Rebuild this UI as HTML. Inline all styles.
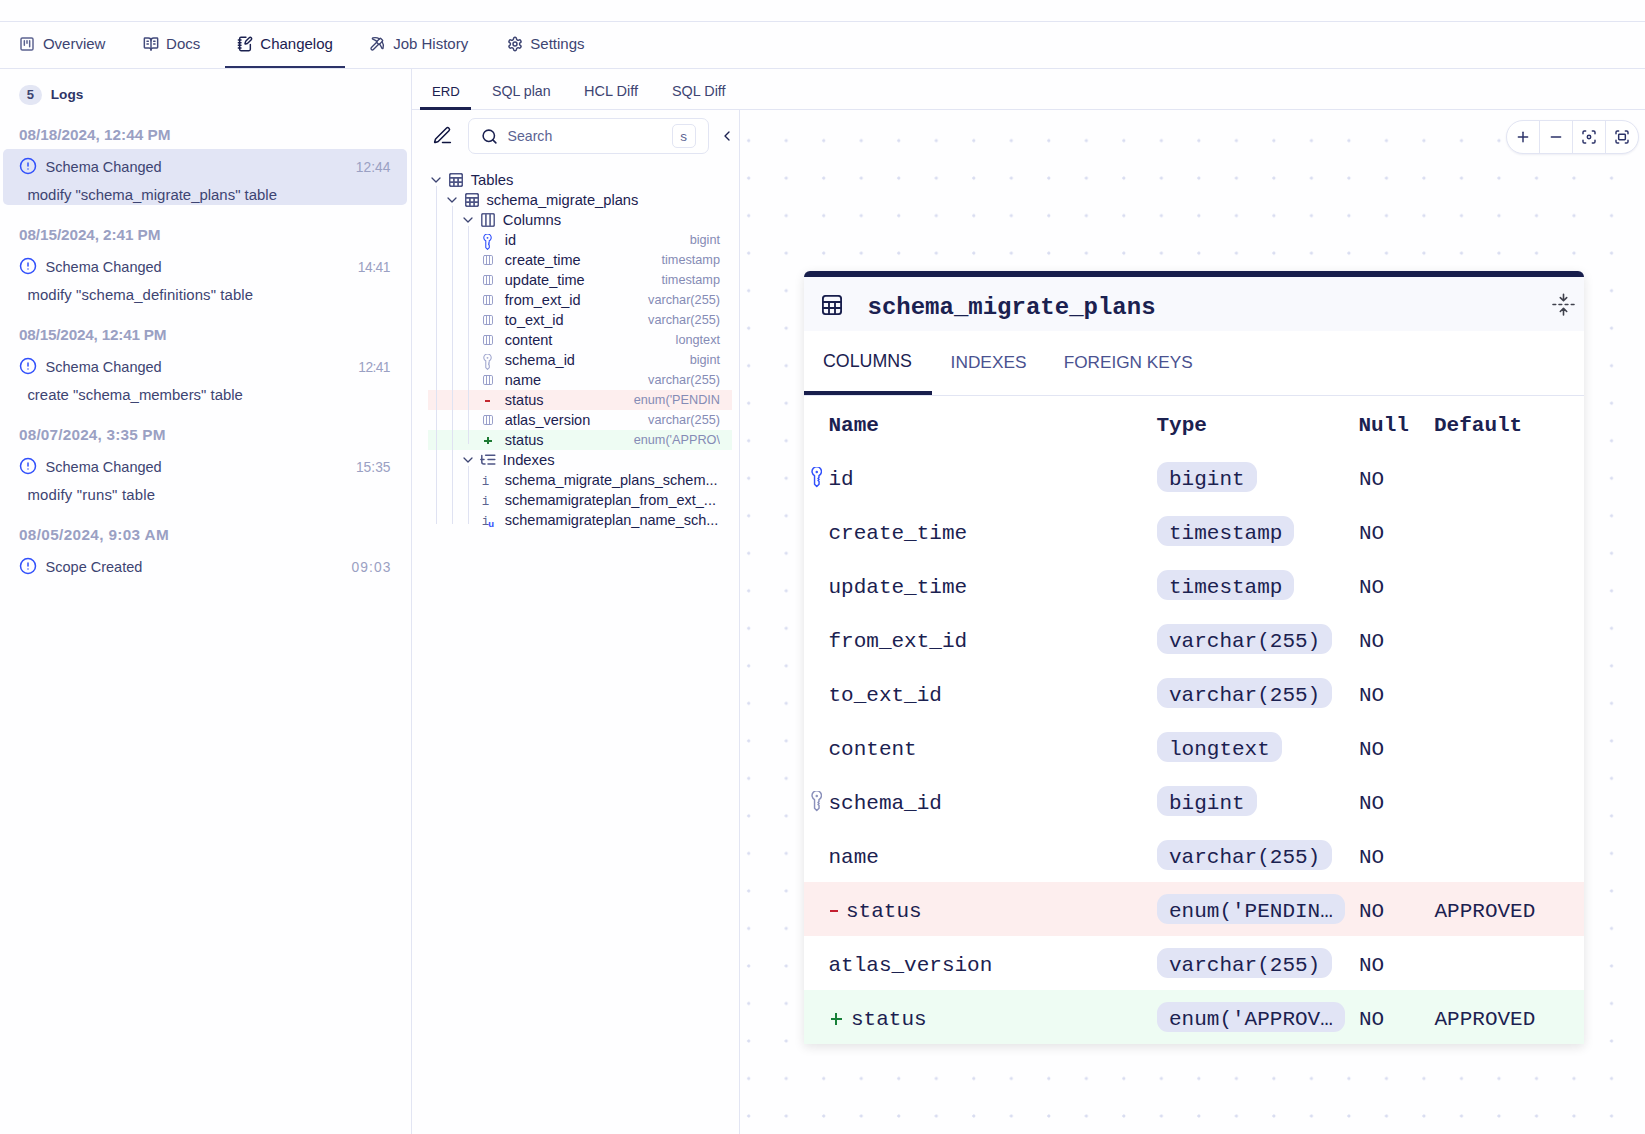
<!DOCTYPE html>
<html><head><meta charset="utf-8"><title>Changelog</title>
<style>
html,body{margin:0;padding:0;}
body{width:1645px;height:1134px;position:relative;overflow:hidden;background:#fefeff;font-family:"Liberation Sans",sans-serif;}
.t{position:absolute;white-space:nowrap;}
.r{position:absolute;}
svg.r{display:block;}
</style></head><body>
<div class="r" style="left:0px;top:21px;width:1645px;height:1px;background:#e2e5f3;"></div>
<div class="r" style="left:0px;top:68px;width:1645px;height:1px;background:#e2e5f3;"></div>
<div class="r" style="left:225px;top:66px;width:120px;height:2px;background:#2b3268;"></div>
<div class="t" style="left:42.9px;top:36.30px;font-size:15px;line-height:15px;font-family:'Liberation Sans',sans-serif;color:#3d4472;font-weight:400;">Overview</div>
<div class="t" style="left:166.1px;top:36.30px;font-size:15px;line-height:15px;font-family:'Liberation Sans',sans-serif;color:#3d4472;font-weight:400;">Docs</div>
<div class="t" style="left:260.29999999999995px;top:36.30px;font-size:15px;line-height:15px;font-family:'Liberation Sans',sans-serif;color:#1b2150;font-weight:400;">Changelog</div>
<div class="t" style="left:393.2px;top:36.30px;font-size:15px;line-height:15px;font-family:'Liberation Sans',sans-serif;color:#3d4472;font-weight:400;">Job History</div>
<div class="t" style="left:530.3px;top:36.30px;font-size:15px;line-height:15px;font-family:'Liberation Sans',sans-serif;color:#3d4472;font-weight:400;">Settings</div>
<svg class="r" style="left:19px;top:36px;" width="16" height="16" viewBox="0 0 24 24" fill="none" stroke="#5b6290" stroke-width="2.2" stroke-linecap="round" stroke-linejoin="round"><rect width="18" height="18" x="3" y="3" rx="2"/><path d="M8 7v7"/><path d="M12 7v4"/><path d="M16 7v9"/></svg>
<svg class="r" style="left:143px;top:36px;" width="16" height="16" viewBox="0 0 24 24" fill="none" stroke="#424a7c" stroke-width="2.2" stroke-linecap="round" stroke-linejoin="round"><path d="M12 7v14"/><path d="M16 12h2"/><path d="M16 8h2"/><path d="M3 18a1 1 0 0 1-1-1V4a1 1 0 0 1 1-1h5a4 4 0 0 1 4 4 4 4 0 0 1 4-4h5a1 1 0 0 1 1 1v13a1 1 0 0 1-1 1h-6a3 3 0 0 0-3 3 3 3 0 0 0-3-3z"/><path d="M6 12h2"/><path d="M6 8h2"/></svg>
<svg class="r" style="left:237px;top:36px;" width="16" height="16" viewBox="0 0 24 24" fill="none" stroke="#1b2150" stroke-width="2.2" stroke-linecap="round" stroke-linejoin="round"><path d="M13.4 2H6a2 2 0 0 0-2 2v16a2 2 0 0 0 2 2h12a2 2 0 0 0 2-2v-7.4"/><path d="M2 6h4"/><path d="M2 10h4"/><path d="M2 14h4"/><path d="M2 18h4"/><path d="M21.378 5.626a1 1 0 1 0-3.004-3.004l-5.01 5.012a2 2 0 0 0-.506.854l-.837 2.87a.5.5 0 0 0 .62.62l2.87-.837a2 2 0 0 0 .854-.506z"/></svg>
<svg class="r" style="left:369px;top:36px;" width="16" height="16" viewBox="0 0 24 24" fill="none" stroke="#3d4472" stroke-width="2" stroke-linecap="round" stroke-linejoin="round"><path d="M14.531 12.469 6.619 20.38a1 1 0 1 1-3-3l7.912-7.912"/><path d="M15.686 4.314A12.5 12.5 0 0 0 5.461 2.958 1 1 0 0 0 5.58 4.71a22 22 0 0 1 6.318 3.393"/><path d="M17.7 3.7a1 1 0 0 0-1.4 0l-4.6 4.6a1 1 0 0 0 0 1.4l2.6 2.6a1 1 0 0 0 1.4 0l4.6-4.6a1 1 0 0 0 0-1.4z"/><path d="M19.686 8.314a12.501 12.501 0 0 1 1.356 10.225 1 1 0 0 1-1.751-.119 22 22 0 0 0-3.393-6.319"/></svg>
<svg class="r" style="left:507px;top:36px;" width="16" height="16" viewBox="0 0 24 24" fill="none" stroke="#3d4472" stroke-width="2.2" stroke-linecap="round" stroke-linejoin="round"><path d="M12.22 2h-.44a2 2 0 0 0-2 2v.18a2 2 0 0 1-1 1.73l-.43.25a2 2 0 0 1-2 0l-.15-.08a2 2 0 0 0-2.73.73l-.22.38a2 2 0 0 0 .73 2.73l.15.1a2 2 0 0 1 1 1.72v.51a2 2 0 0 1-1 1.74l-.15.09a2 2 0 0 0-.73 2.73l.22.38a2 2 0 0 0 2.73.73l.15-.08a2 2 0 0 1 2 0l.43.25a2 2 0 0 1 1 1.73V20a2 2 0 0 0 2 2h.44a2 2 0 0 0 2-2v-.18a2 2 0 0 1 1-1.73l.43-.25a2 2 0 0 1 2 0l.15.08a2 2 0 0 0 2.73-.73l.22-.39a2 2 0 0 0-.73-2.73l-.15-.08a2 2 0 0 1-1-1.74v-.5a2 2 0 0 1 1-1.74l.15-.09a2 2 0 0 0 .73-2.73l-.22-.38a2 2 0 0 0-2.73-.73l-.15.08a2 2 0 0 1-2 0l-.43-.25a2 2 0 0 1-1-1.73V4a2 2 0 0 0-2-2z"/><circle cx="12" cy="12" r="3"/></svg>
<div class="r" style="left:411px;top:69px;width:1px;height:1065px;background:#e2e5f3;"></div>
<div class="r" style="left:19px;top:85px;width:23px;height:20px;background:#e3e6f4;border-radius:10px;"></div>
<div class="t" style="left:26.8px;top:88.00px;font-size:13px;line-height:13px;font-family:'Liberation Sans',sans-serif;color:#3d4472;font-weight:700;">5</div>
<div class="t" style="left:50.8px;top:88.49px;font-size:13.6px;line-height:13.6px;font-family:'Liberation Sans',sans-serif;color:#2d3466;font-weight:700;">Logs</div>
<div class="r" style="left:3px;top:149px;width:404px;height:56px;background:#e2e5f5;border-radius:5px;"></div>
<div class="t" style="left:19px;top:127.05px;font-size:15.3px;line-height:15.3px;font-family:'Liberation Sans',sans-serif;color:#9aa0c3;font-weight:700;letter-spacing:0px;">08/18/2024, 12:44 PM</div>
<svg class="r" style="left:19px;top:157px;" width="18" height="18" viewBox="0 0 24 24" fill="none" stroke="#3150fb" stroke-width="2" stroke-linecap="round" stroke-linejoin="round"><circle cx="12" cy="12" r="10"/><line x1="12" x2="12" y1="8" y2="12"/><line x1="12" x2="12.01" y1="16" y2="16"/></svg>
<div class="t" style="left:45.6px;top:159.73px;font-size:14.5px;line-height:14.5px;font-family:'Liberation Sans',sans-serif;color:#3d4472;font-weight:400;">Schema Changed</div>
<div class="t" style="right:1254.45px;top:161.02px;font-size:13.8px;line-height:13.8px;font-family:'Liberation Sans',sans-serif;color:#9aa0c3;font-weight:400;letter-spacing:0.05px;">12:44</div>
<div class="t" style="left:27.4px;top:188.09px;font-size:14.9px;line-height:14.9px;font-family:'Liberation Sans',sans-serif;color:#3d4472;font-weight:400;letter-spacing:0.018px;">modify "schema_migrate_plans" table</div>
<div class="t" style="left:19px;top:227.05px;font-size:15.3px;line-height:15.3px;font-family:'Liberation Sans',sans-serif;color:#9aa0c3;font-weight:700;letter-spacing:-0.08px;">08/15/2024, 2:41 PM</div>
<svg class="r" style="left:19px;top:257px;" width="18" height="18" viewBox="0 0 24 24" fill="none" stroke="#3150fb" stroke-width="2" stroke-linecap="round" stroke-linejoin="round"><circle cx="12" cy="12" r="10"/><line x1="12" x2="12" y1="8" y2="12"/><line x1="12" x2="12.01" y1="16" y2="16"/></svg>
<div class="t" style="left:45.6px;top:259.73px;font-size:14.5px;line-height:14.5px;font-family:'Liberation Sans',sans-serif;color:#3d4472;font-weight:400;">Schema Changed</div>
<div class="t" style="right:1254.925px;top:261.02px;font-size:13.8px;line-height:13.8px;font-family:'Liberation Sans',sans-serif;color:#9aa0c3;font-weight:400;letter-spacing:-0.425px;">14:41</div>
<div class="t" style="left:27.4px;top:288.09px;font-size:14.9px;line-height:14.9px;font-family:'Liberation Sans',sans-serif;color:#3d4472;font-weight:400;letter-spacing:0.097px;">modify "schema_definitions" table</div>
<div class="t" style="left:19px;top:327.05px;font-size:15.3px;line-height:15.3px;font-family:'Liberation Sans',sans-serif;color:#9aa0c3;font-weight:700;letter-spacing:-0.2px;">08/15/2024, 12:41 PM</div>
<svg class="r" style="left:19px;top:357px;" width="18" height="18" viewBox="0 0 24 24" fill="none" stroke="#3150fb" stroke-width="2" stroke-linecap="round" stroke-linejoin="round"><circle cx="12" cy="12" r="10"/><line x1="12" x2="12" y1="8" y2="12"/><line x1="12" x2="12.01" y1="16" y2="16"/></svg>
<div class="t" style="left:45.6px;top:359.73px;font-size:14.5px;line-height:14.5px;font-family:'Liberation Sans',sans-serif;color:#3d4472;font-weight:400;">Schema Changed</div>
<div class="t" style="right:1255.075px;top:361.02px;font-size:13.8px;line-height:13.8px;font-family:'Liberation Sans',sans-serif;color:#9aa0c3;font-weight:400;letter-spacing:-0.575px;">12:41</div>
<div class="t" style="left:27.4px;top:388.09px;font-size:14.9px;line-height:14.9px;font-family:'Liberation Sans',sans-serif;color:#3d4472;font-weight:400;letter-spacing:0.018px;">create "schema_members" table</div>
<div class="t" style="left:19px;top:427.05px;font-size:15.3px;line-height:15.3px;font-family:'Liberation Sans',sans-serif;color:#9aa0c3;font-weight:700;letter-spacing:0.2px;">08/07/2024, 3:35 PM</div>
<svg class="r" style="left:19px;top:457px;" width="18" height="18" viewBox="0 0 24 24" fill="none" stroke="#3150fb" stroke-width="2" stroke-linecap="round" stroke-linejoin="round"><circle cx="12" cy="12" r="10"/><line x1="12" x2="12" y1="8" y2="12"/><line x1="12" x2="12.01" y1="16" y2="16"/></svg>
<div class="t" style="left:45.6px;top:459.73px;font-size:14.5px;line-height:14.5px;font-family:'Liberation Sans',sans-serif;color:#3d4472;font-weight:400;">Schema Changed</div>
<div class="t" style="right:1254.475px;top:461.02px;font-size:13.8px;line-height:13.8px;font-family:'Liberation Sans',sans-serif;color:#9aa0c3;font-weight:400;letter-spacing:0.025px;">15:35</div>
<div class="t" style="left:27.4px;top:488.09px;font-size:14.9px;line-height:14.9px;font-family:'Liberation Sans',sans-serif;color:#3d4472;font-weight:400;letter-spacing:0.206px;">modify "runs" table</div>
<div class="t" style="left:19px;top:527.05px;font-size:15.3px;line-height:15.3px;font-family:'Liberation Sans',sans-serif;color:#9aa0c3;font-weight:700;letter-spacing:0.36px;">08/05/2024, 9:03 AM</div>
<svg class="r" style="left:19px;top:557px;" width="18" height="18" viewBox="0 0 24 24" fill="none" stroke="#3150fb" stroke-width="2" stroke-linecap="round" stroke-linejoin="round"><circle cx="12" cy="12" r="10"/><line x1="12" x2="12" y1="8" y2="12"/><line x1="12" x2="12.01" y1="16" y2="16"/></svg>
<div class="t" style="left:45.6px;top:559.73px;font-size:14.5px;line-height:14.5px;font-family:'Liberation Sans',sans-serif;color:#3d4472;font-weight:400;">Scope Created</div>
<div class="t" style="right:1253.4px;top:561.02px;font-size:13.8px;line-height:13.8px;font-family:'Liberation Sans',sans-serif;color:#9aa0c3;font-weight:400;letter-spacing:1.1px;">09:03</div>
<div class="r" style="left:739px;top:110px;width:1px;height:1024px;background:#e2e5f3;"></div>
<div class="r" style="left:412px;top:109px;width:327px;height:1px;background:#e2e5f3;"></div>
<div class="r" style="left:739px;top:109px;width:906px;height:1px;background:#e2e5f3;"></div>
<div class="r" style="left:420px;top:107px;width:51px;height:3px;background:#1b2150;"></div>
<div class="t" style="left:432px;top:84.83px;font-size:13.2px;line-height:13.2px;font-family:'Liberation Sans',sans-serif;color:#1b2150;font-weight:400;">ERD</div>
<div class="t" style="left:492px;top:83.98px;font-size:14.2px;line-height:14.2px;font-family:'Liberation Sans',sans-serif;color:#3d4472;font-weight:400;">SQL plan</div>
<div class="t" style="left:584px;top:83.73px;font-size:14.5px;line-height:14.5px;font-family:'Liberation Sans',sans-serif;color:#3d4472;font-weight:400;">HCL Diff</div>
<div class="t" style="left:672px;top:83.81px;font-size:14.4px;line-height:14.4px;font-family:'Liberation Sans',sans-serif;color:#3d4472;font-weight:400;">SQL Diff</div>
<svg class="r" style="left:431.5px;top:125px;" width="21" height="21" viewBox="0 0 24 24" fill="none" stroke="#0f1440" stroke-width="1.7" stroke-linecap="round" stroke-linejoin="round"><path d="M12 20h9"/><path d="M16.376 3.622a1 1 0 0 1 3.002 3.002L7.368 18.635a2 2 0 0 1-.855.506l-2.872.838a.5.5 0 0 1-.62-.62l.838-2.872a2 2 0 0 1 .506-.854z"/></svg>
<div class="r" style="left:468px;top:118px;width:241px;height:36px;background:#fff;border:1px solid #e2e5f3;border-radius:7px;box-sizing:border-box;"></div>
<svg class="r" style="left:480.5px;top:127.7px;" width="17" height="17" viewBox="0 0 24 24" fill="none" stroke="#1b2150" stroke-width="2.2" stroke-linecap="round" stroke-linejoin="round"><circle cx="11" cy="11" r="8"/><path d="m21 21-4.3-4.3"/></svg>
<div class="t" style="left:507.6px;top:129.06px;font-size:14.1px;line-height:14.1px;font-family:'Liberation Sans',sans-serif;color:#5b6392;font-weight:400;">Search</div>
<div class="r" style="left:672px;top:124px;width:24px;height:24px;background:#fff;border:1px solid #e2e5f3;border-radius:5px;box-sizing:border-box;"></div>
<div class="t" style="left:680.3px;top:129.57px;font-size:13.5px;line-height:13.5px;font-family:'Liberation Sans',sans-serif;color:#5b6392;font-weight:400;">s</div>
<svg class="r" style="left:718.5px;top:127.5px;" width="16" height="16" viewBox="0 0 24 24" fill="none" stroke="#1b2150" stroke-width="2" stroke-linecap="round" stroke-linejoin="round"><path d="m15 18-6-6 6-6"/></svg>
<svg class="r" style="left:428.1px;top:172px;" width="16" height="16" viewBox="0 0 24 24" fill="none" stroke="#3d4472" stroke-width="1.9" stroke-linecap="round" stroke-linejoin="round"><path d="m6 9 6 6 6-6"/></svg>
<svg class="r" style="left:449px;top:173px;" width="14" height="14" viewBox="0 0 20 20" fill="none" stroke="#4d5485" stroke-width="2.4" stroke-linecap="round" stroke-linejoin="round"><rect x="0.9" y="0.9" width="18.2" height="18.2" rx="2.8"/><path d="M1 7h18M1 13h18M7 7v12M13 7v12"/></svg>
<div class="t" style="left:470.7px;top:173.07px;font-size:14.8px;line-height:14.8px;font-family:'Liberation Sans',sans-serif;color:#1b2150;font-weight:400;">Tables</div>
<svg class="r" style="left:444.1px;top:192px;" width="16" height="16" viewBox="0 0 24 24" fill="none" stroke="#3d4472" stroke-width="1.9" stroke-linecap="round" stroke-linejoin="round"><path d="m6 9 6 6 6-6"/></svg>
<svg class="r" style="left:465px;top:193px;" width="14" height="14" viewBox="0 0 20 20" fill="none" stroke="#4d5485" stroke-width="2.4" stroke-linecap="round" stroke-linejoin="round"><rect x="0.9" y="0.9" width="18.2" height="18.2" rx="2.8"/><path d="M1 7h18M1 13h18M7 7v12M13 7v12"/></svg>
<div class="t" style="left:486.5px;top:192.56px;font-size:14.7px;line-height:14.7px;font-family:'Liberation Sans',sans-serif;color:#1b2150;font-weight:400;">schema_migrate_plans</div>
<svg class="r" style="left:460.1px;top:212px;" width="16" height="16" viewBox="0 0 24 24" fill="none" stroke="#3d4472" stroke-width="1.9" stroke-linecap="round" stroke-linejoin="round"><path d="m6 9 6 6 6-6"/></svg>
<svg class="r" style="left:481px;top:213px;" width="14" height="14" viewBox="0 0 20 20" fill="none" stroke="#5b6290" stroke-width="2.4" stroke-linecap="round" stroke-linejoin="round"><rect x="1" y="1" width="18" height="18" rx="2.5"/><path d="M7 1v18M13 1v18"/></svg>
<div class="t" style="left:502.8px;top:212.97px;font-size:14.8px;line-height:14.8px;font-family:'Liberation Sans',sans-serif;color:#1b2150;font-weight:400;">Columns</div>
<svg class="r" style="left:483px;top:233.5px;color:#3150fb" width="9" height="16.5" viewBox="0 0 11 21" fill="none" stroke="#3150fb" stroke-width="1.4" stroke-linecap="round" stroke-linejoin="round"><path d="M3.3 8.7A4.7 4.7 0 1 1 7.7 8.7V10.6L6.8 11.5L7.8 12.5L6.8 13.5L7.8 14.5V17.2L5.5 19.5L3.3 17.2Z"/><circle cx="5.5" cy="4.9" r="0.5" fill="currentColor"/></svg>
<div class="t" style="left:504.8px;top:232.73px;font-size:14.5px;line-height:14.5px;font-family:'Liberation Sans',sans-serif;color:#1b2150;font-weight:400;">id</div>
<div class="t" style="right:925px;top:234.25px;font-size:12.7px;line-height:12.7px;font-family:'Liberation Sans',sans-serif;color:#858bb5;font-weight:400;">bigint</div>
<svg class="r" style="left:483px;top:255px;" width="10" height="10" viewBox="0 0 20 20" fill="none" stroke="#959bc8" stroke-width="1.9" stroke-linecap="round" stroke-linejoin="round"><rect x="1" y="1" width="18" height="18" rx="2.5"/><path d="M7 1v18M13 1v18"/></svg>
<div class="t" style="left:504.8px;top:252.73px;font-size:14.5px;line-height:14.5px;font-family:'Liberation Sans',sans-serif;color:#1b2150;font-weight:400;">create_time</div>
<div class="t" style="right:925px;top:254.25px;font-size:12.7px;line-height:12.7px;font-family:'Liberation Sans',sans-serif;color:#858bb5;font-weight:400;">timestamp</div>
<svg class="r" style="left:483px;top:275px;" width="10" height="10" viewBox="0 0 20 20" fill="none" stroke="#959bc8" stroke-width="1.9" stroke-linecap="round" stroke-linejoin="round"><rect x="1" y="1" width="18" height="18" rx="2.5"/><path d="M7 1v18M13 1v18"/></svg>
<div class="t" style="left:504.8px;top:272.73px;font-size:14.5px;line-height:14.5px;font-family:'Liberation Sans',sans-serif;color:#1b2150;font-weight:400;">update_time</div>
<div class="t" style="right:925px;top:274.25px;font-size:12.7px;line-height:12.7px;font-family:'Liberation Sans',sans-serif;color:#858bb5;font-weight:400;">timestamp</div>
<svg class="r" style="left:483px;top:295px;" width="10" height="10" viewBox="0 0 20 20" fill="none" stroke="#959bc8" stroke-width="1.9" stroke-linecap="round" stroke-linejoin="round"><rect x="1" y="1" width="18" height="18" rx="2.5"/><path d="M7 1v18M13 1v18"/></svg>
<div class="t" style="left:504.8px;top:292.73px;font-size:14.5px;line-height:14.5px;font-family:'Liberation Sans',sans-serif;color:#1b2150;font-weight:400;">from_ext_id</div>
<div class="t" style="right:925px;top:294.25px;font-size:12.7px;line-height:12.7px;font-family:'Liberation Sans',sans-serif;color:#858bb5;font-weight:400;">varchar(255)</div>
<svg class="r" style="left:483px;top:315px;" width="10" height="10" viewBox="0 0 20 20" fill="none" stroke="#959bc8" stroke-width="1.9" stroke-linecap="round" stroke-linejoin="round"><rect x="1" y="1" width="18" height="18" rx="2.5"/><path d="M7 1v18M13 1v18"/></svg>
<div class="t" style="left:504.8px;top:312.73px;font-size:14.5px;line-height:14.5px;font-family:'Liberation Sans',sans-serif;color:#1b2150;font-weight:400;">to_ext_id</div>
<div class="t" style="right:925px;top:314.25px;font-size:12.7px;line-height:12.7px;font-family:'Liberation Sans',sans-serif;color:#858bb5;font-weight:400;">varchar(255)</div>
<svg class="r" style="left:483px;top:335px;" width="10" height="10" viewBox="0 0 20 20" fill="none" stroke="#959bc8" stroke-width="1.9" stroke-linecap="round" stroke-linejoin="round"><rect x="1" y="1" width="18" height="18" rx="2.5"/><path d="M7 1v18M13 1v18"/></svg>
<div class="t" style="left:504.8px;top:332.73px;font-size:14.5px;line-height:14.5px;font-family:'Liberation Sans',sans-serif;color:#1b2150;font-weight:400;">content</div>
<div class="t" style="right:925px;top:334.25px;font-size:12.7px;line-height:12.7px;font-family:'Liberation Sans',sans-serif;color:#858bb5;font-weight:400;">longtext</div>
<svg class="r" style="left:483px;top:353.5px;color:#a3a9d0" width="9" height="16.5" viewBox="0 0 11 21" fill="none" stroke="#a3a9d0" stroke-width="1.4" stroke-linecap="round" stroke-linejoin="round"><path d="M3.3 8.7A4.7 4.7 0 1 1 7.7 8.7V10.6L6.8 11.5L7.8 12.5L6.8 13.5L7.8 14.5V17.2L5.5 19.5L3.3 17.2Z"/><circle cx="5.5" cy="4.9" r="0.5" fill="currentColor"/></svg>
<div class="t" style="left:504.8px;top:352.73px;font-size:14.5px;line-height:14.5px;font-family:'Liberation Sans',sans-serif;color:#1b2150;font-weight:400;">schema_id</div>
<div class="t" style="right:925px;top:354.25px;font-size:12.7px;line-height:12.7px;font-family:'Liberation Sans',sans-serif;color:#858bb5;font-weight:400;">bigint</div>
<svg class="r" style="left:483px;top:375px;" width="10" height="10" viewBox="0 0 20 20" fill="none" stroke="#959bc8" stroke-width="1.9" stroke-linecap="round" stroke-linejoin="round"><rect x="1" y="1" width="18" height="18" rx="2.5"/><path d="M7 1v18M13 1v18"/></svg>
<div class="t" style="left:504.8px;top:372.73px;font-size:14.5px;line-height:14.5px;font-family:'Liberation Sans',sans-serif;color:#1b2150;font-weight:400;">name</div>
<div class="t" style="right:925px;top:374.25px;font-size:12.7px;line-height:12.7px;font-family:'Liberation Sans',sans-serif;color:#858bb5;font-weight:400;">varchar(255)</div>
<div class="r" style="left:428px;top:390px;width:304px;height:20px;background:#fdeeee;"></div>
<div class="r" style="left:485.2px;top:400.2px;width:5px;height:1.7px;background:#c4262e;"></div>
<div class="t" style="left:504.8px;top:392.73px;font-size:14.5px;line-height:14.5px;font-family:'Liberation Sans',sans-serif;color:#1b2150;font-weight:400;">status</div>
<div class="t" style="left:600px;width:120px;top:392.25px;height:17px;overflow:hidden;font-size:12.7px;line-height:17px;font-family:'Liberation Sans',sans-serif;color:#858bb5;text-align:right;white-space:nowrap;"><span style="position:relative;top:-0px">enum('PENDIN</span></div>
<svg class="r" style="left:483px;top:415px;" width="10" height="10" viewBox="0 0 20 20" fill="none" stroke="#959bc8" stroke-width="1.9" stroke-linecap="round" stroke-linejoin="round"><rect x="1" y="1" width="18" height="18" rx="2.5"/><path d="M7 1v18M13 1v18"/></svg>
<div class="t" style="left:504.8px;top:412.73px;font-size:14.5px;line-height:14.5px;font-family:'Liberation Sans',sans-serif;color:#1b2150;font-weight:400;">atlas_version</div>
<div class="t" style="right:925px;top:414.25px;font-size:12.7px;line-height:12.7px;font-family:'Liberation Sans',sans-serif;color:#858bb5;font-weight:400;">varchar(255)</div>
<div class="r" style="left:428px;top:430px;width:304px;height:20px;background:#eefcf3;"></div>
<div class="r" style="left:484.2px;top:440.1px;width:7.8px;height:1.6px;background:#1d7a33;"></div>
<div class="r" style="left:487.3px;top:436.7px;width:1.6px;height:7.8px;background:#1d7a33;"></div>
<div class="t" style="left:504.8px;top:432.73px;font-size:14.5px;line-height:14.5px;font-family:'Liberation Sans',sans-serif;color:#1b2150;font-weight:400;">status</div>
<div class="t" style="left:600px;width:120px;top:432.25px;height:17px;overflow:hidden;font-size:12.7px;line-height:17px;font-family:'Liberation Sans',sans-serif;color:#858bb5;text-align:right;white-space:nowrap;"><span style="position:relative;top:-0px">enum('APPRO\</span></div>
<div class="r" style="left:436px;top:186px;width:1px;height:338px;background:#dfe2f2;"></div>
<div class="r" style="left:452px;top:206px;width:1px;height:318px;background:#dfe2f2;"></div>
<div class="r" style="left:468px;top:226px;width:1px;height:218px;background:#dfe2f2;"></div>
<div class="r" style="left:468px;top:466px;width:1px;height:58px;background:#dfe2f2;"></div>
<svg class="r" style="left:460.1px;top:452px;" width="16" height="16" viewBox="0 0 24 24" fill="none" stroke="#3d4472" stroke-width="1.9" stroke-linecap="round" stroke-linejoin="round"><path d="m6 9 6 6 6-6"/></svg>
<svg class="r" style="left:476px;top:448px;" width="28" height="20" viewBox="0 0 28 20" fill="none" stroke="#4d5485" stroke-width="1.5" stroke-linecap="round" stroke-linejoin="round"><path d="M5.8 7.6V14a2 2 0 0 0 2 2H9"/><path d="M4.8 11.6H8"/><path d="M9.6 7.2H18.8"/><path d="M12 11.6H18.8"/><path d="M12 15.9H18.8"/></svg>
<div class="t" style="left:502.8px;top:452.97px;font-size:14.8px;line-height:14.8px;font-family:'Liberation Sans',sans-serif;color:#1b2150;font-weight:400;">Indexes</div>
<div class="t" style="left:481.8px;top:475.93px;font-size:12.5px;line-height:12.5px;font-family:'Liberation Mono',monospace;color:#5b6290;font-weight:400;">i</div>
<div class="t" style="left:504.8px;top:472.73px;font-size:14.5px;line-height:14.5px;font-family:'Liberation Sans',sans-serif;color:#1b2150;font-weight:400;">schema_migrate_plans_schem...</div>
<div class="t" style="left:481.8px;top:495.93px;font-size:12.5px;line-height:12.5px;font-family:'Liberation Mono',monospace;color:#5b6290;font-weight:400;">i</div>
<div class="t" style="left:504.8px;top:492.73px;font-size:14.5px;line-height:14.5px;font-family:'Liberation Sans',sans-serif;color:#1b2150;font-weight:400;">schemamigrateplan_from_ext_...</div>
<div class="t" style="left:481.8px;top:515.92px;font-size:12.5px;line-height:12.5px;font-family:'Liberation Mono',monospace;color:#5b6290;font-weight:400;">i</div>
<div class="t" style="left:488.3px;top:518.96px;font-size:9.5px;line-height:9.5px;font-family:'Liberation Sans',sans-serif;color:#3150fb;font-weight:700;">u</div>
<div class="t" style="left:504.8px;top:512.73px;font-size:14.5px;line-height:14.5px;font-family:'Liberation Sans',sans-serif;color:#1b2150;font-weight:400;">schemamigrateplan_name_sch...</div>
<div class="r" style="left:740px;top:110px;width:905px;height:1024px;background-image:radial-gradient(circle at 8.7px 30.6px,#d9ddf1 1.2px,transparent 1.9px);background-size:37.52px 37.52px;"></div>
<div class="r" style="left:1506px;top:120px;width:133px;height:34px;background:#fff;border:1px solid #e2e5f3;border-radius:17px;box-sizing:border-box;box-shadow:0 1px 2px rgba(40,50,120,0.08);"></div>
<div class="r" style="left:1539px;top:121px;width:1px;height:32px;background:#e2e5f3;"></div>
<div class="r" style="left:1572px;top:121px;width:1px;height:32px;background:#e2e5f3;"></div>
<div class="r" style="left:1605px;top:121px;width:1px;height:32px;background:#e2e5f3;"></div>
<svg class="r" style="left:1515.2px;top:128.9px;" width="16" height="16" viewBox="0 0 24 24" fill="none" stroke="#2b3268" stroke-width="2.2" stroke-linecap="round" stroke-linejoin="round"><path d="M5 12h14"/><path d="M12 5v14"/></svg>
<svg class="r" style="left:1548px;top:128.9px;" width="16" height="16" viewBox="0 0 24 24" fill="none" stroke="#2b3268" stroke-width="2.2" stroke-linecap="round" stroke-linejoin="round"><path d="M5 12h14"/></svg>
<svg class="r" style="left:1581px;top:128.9px;" width="16" height="16" viewBox="0 0 24 24" fill="none" stroke="#2b3268" stroke-width="2.2" stroke-linecap="round" stroke-linejoin="round"><path d="M3 7V5a2 2 0 0 1 2-2h2"/><path d="M17 3h2a2 2 0 0 1 2 2v2"/><path d="M21 17v2a2 2 0 0 1-2 2h-2"/><path d="M7 21H5a2 2 0 0 1-2-2v-2"/><circle cx="12" cy="12" r="2.6"/></svg>
<svg class="r" style="left:1614px;top:128.9px;" width="16" height="16" viewBox="0 0 24 24" fill="none" stroke="#2b3268" stroke-width="2.2" stroke-linecap="round" stroke-linejoin="round"><path d="M3 7V5a2 2 0 0 1 2-2h2"/><path d="M17 3h2a2 2 0 0 1 2 2v2"/><path d="M21 17v2a2 2 0 0 1-2 2h-2"/><path d="M7 21H5a2 2 0 0 1-2-2v-2"/><rect width="10" height="8" x="7" y="8" rx="1"/></svg>
<div class="r" style="left:804px;top:271px;width:780px;height:773px;background:#fff;border-radius:6px 6px 0 0;box-shadow:0 3px 11px rgba(0,0,0,0.11);"></div>
<div class="r" style="left:804px;top:271px;width:780px;height:6px;background:#181e4c;border-radius:6px 6px 0 0;"></div>
<div class="r" style="left:804px;top:277px;width:780px;height:54px;background:#f8f9fd;"></div>
<svg class="r" style="left:821.5px;top:294.5px;" width="20" height="20" viewBox="0 0 20 20" fill="none" stroke="#181e4c" stroke-width="1.85" stroke-linecap="round" stroke-linejoin="round"><rect x="0.9" y="0.9" width="18.2" height="18.2" rx="2.8"/><path d="M1 7h18M1 13h18M7 7v12M13 7v12"/></svg>
<div class="t" style="left:867.5px;top:295.62px;font-size:24px;line-height:24px;font-family:'Liberation Mono',monospace;color:#1b2150;font-weight:700;">schema_migrate_plans</div>
<svg class="r" style="left:1548px;top:290px;" width="30" height="30" viewBox="0 0 30 30" fill="none" stroke="#3f414c" stroke-width="1.6" stroke-linecap="round" stroke-linejoin="round"><path d="M15.5 4.2V10.4M12.3 7.6L15.5 10.7L18.7 7.6M15.5 25V18.7M12.3 21.5L15.5 18.3L18.7 21.5"/><path d="M5 14.5h2.7M11 14.5h2.7M17.2 14.5h2.7M23.3 14.5h2.7"/></svg>
<div class="r" style="left:804px;top:395px;width:780px;height:1px;background:#e2e5f3;"></div>
<div class="r" style="left:804px;top:391px;width:128px;height:4px;background:#181e4c;"></div>
<div class="t" style="left:823px;top:353.23px;font-size:17.8px;line-height:17.8px;font-family:'Liberation Sans',sans-serif;color:#1b2150;font-weight:400;">COLUMNS</div>
<div class="t" style="left:950.6px;top:353.66px;font-size:17.3px;line-height:17.3px;font-family:'Liberation Sans',sans-serif;color:#4a5290;font-weight:400;">INDEXES</div>
<div class="t" style="left:1063.7px;top:353.74px;font-size:17.2px;line-height:17.2px;font-family:'Liberation Sans',sans-serif;color:#4a5290;font-weight:400;">FOREIGN KEYS</div>
<div class="t" style="left:828.5px;top:414.61px;font-size:21px;line-height:21px;font-family:'Liberation Mono',monospace;color:#1b2150;font-weight:700;">Name</div>
<div class="t" style="left:1156.5px;top:414.61px;font-size:21px;line-height:21px;font-family:'Liberation Mono',monospace;color:#1b2150;font-weight:700;">Type</div>
<div class="t" style="left:1358.5px;top:414.61px;font-size:21px;line-height:21px;font-family:'Liberation Mono',monospace;color:#1b2150;font-weight:700;">Null</div>
<div class="t" style="left:1434px;top:414.61px;font-size:21px;line-height:21px;font-family:'Liberation Mono',monospace;color:#1b2150;font-weight:700;">Default</div>
<svg class="r" style="left:810.5px;top:467px;color:#3150fb" width="11.5" height="21" viewBox="0 0 11 21" fill="none" stroke="#3150fb" stroke-width="1.45" stroke-linecap="round" stroke-linejoin="round"><path d="M3.3 8.7A4.7 4.7 0 1 1 7.7 8.7V10.6L6.8 11.5L7.8 12.5L6.8 13.5L7.8 14.5V17.2L5.5 19.5L3.3 17.2Z"/><circle cx="5.5" cy="4.9" r="0.5" fill="currentColor"/></svg>
<div class="t" style="left:828.5px;top:469.11px;font-size:21px;line-height:21px;font-family:'Liberation Mono',monospace;color:#1b2150;font-weight:400;">id</div>
<div class="r" style="left:1157px;top:462px;width:100px;height:30px;background:#e1e4f5;border-radius:11px;"></div>
<div class="t" style="left:1169px;top:469.11px;font-size:21px;line-height:21px;font-family:'Liberation Mono',monospace;color:#1b2150;font-weight:400;">bigint</div>
<div class="t" style="left:1359px;top:469.11px;font-size:21px;line-height:21px;font-family:'Liberation Mono',monospace;color:#1b2150;font-weight:400;">NO</div>
<div class="t" style="left:828.5px;top:523.11px;font-size:21px;line-height:21px;font-family:'Liberation Mono',monospace;color:#1b2150;font-weight:400;">create_time</div>
<div class="r" style="left:1157px;top:516px;width:137px;height:30px;background:#e1e4f5;border-radius:11px;"></div>
<div class="t" style="left:1169px;top:523.11px;font-size:21px;line-height:21px;font-family:'Liberation Mono',monospace;color:#1b2150;font-weight:400;">timestamp</div>
<div class="t" style="left:1359px;top:523.11px;font-size:21px;line-height:21px;font-family:'Liberation Mono',monospace;color:#1b2150;font-weight:400;">NO</div>
<div class="t" style="left:828.5px;top:577.11px;font-size:21px;line-height:21px;font-family:'Liberation Mono',monospace;color:#1b2150;font-weight:400;">update_time</div>
<div class="r" style="left:1157px;top:570px;width:137px;height:30px;background:#e1e4f5;border-radius:11px;"></div>
<div class="t" style="left:1169px;top:577.11px;font-size:21px;line-height:21px;font-family:'Liberation Mono',monospace;color:#1b2150;font-weight:400;">timestamp</div>
<div class="t" style="left:1359px;top:577.11px;font-size:21px;line-height:21px;font-family:'Liberation Mono',monospace;color:#1b2150;font-weight:400;">NO</div>
<div class="t" style="left:828.5px;top:631.11px;font-size:21px;line-height:21px;font-family:'Liberation Mono',monospace;color:#1b2150;font-weight:400;">from_ext_id</div>
<div class="r" style="left:1157px;top:624px;width:175px;height:30px;background:#e1e4f5;border-radius:11px;"></div>
<div class="t" style="left:1169px;top:631.11px;font-size:21px;line-height:21px;font-family:'Liberation Mono',monospace;color:#1b2150;font-weight:400;">varchar(255)</div>
<div class="t" style="left:1359px;top:631.11px;font-size:21px;line-height:21px;font-family:'Liberation Mono',monospace;color:#1b2150;font-weight:400;">NO</div>
<div class="t" style="left:828.5px;top:685.11px;font-size:21px;line-height:21px;font-family:'Liberation Mono',monospace;color:#1b2150;font-weight:400;">to_ext_id</div>
<div class="r" style="left:1157px;top:678px;width:175px;height:30px;background:#e1e4f5;border-radius:11px;"></div>
<div class="t" style="left:1169px;top:685.11px;font-size:21px;line-height:21px;font-family:'Liberation Mono',monospace;color:#1b2150;font-weight:400;">varchar(255)</div>
<div class="t" style="left:1359px;top:685.11px;font-size:21px;line-height:21px;font-family:'Liberation Mono',monospace;color:#1b2150;font-weight:400;">NO</div>
<div class="t" style="left:828.5px;top:739.11px;font-size:21px;line-height:21px;font-family:'Liberation Mono',monospace;color:#1b2150;font-weight:400;">content</div>
<div class="r" style="left:1157px;top:732px;width:125px;height:30px;background:#e1e4f5;border-radius:11px;"></div>
<div class="t" style="left:1169px;top:739.11px;font-size:21px;line-height:21px;font-family:'Liberation Mono',monospace;color:#1b2150;font-weight:400;">longtext</div>
<div class="t" style="left:1359px;top:739.11px;font-size:21px;line-height:21px;font-family:'Liberation Mono',monospace;color:#1b2150;font-weight:400;">NO</div>
<svg class="r" style="left:810.5px;top:791px;color:#8a90bb" width="11.5" height="21" viewBox="0 0 11 21" fill="none" stroke="#8a90bb" stroke-width="1.45" stroke-linecap="round" stroke-linejoin="round"><path d="M3.3 8.7A4.7 4.7 0 1 1 7.7 8.7V10.6L6.8 11.5L7.8 12.5L6.8 13.5L7.8 14.5V17.2L5.5 19.5L3.3 17.2Z"/><circle cx="5.5" cy="4.9" r="0.5" fill="currentColor"/></svg>
<div class="t" style="left:828.5px;top:793.11px;font-size:21px;line-height:21px;font-family:'Liberation Mono',monospace;color:#1b2150;font-weight:400;">schema_id</div>
<div class="r" style="left:1157px;top:786px;width:100px;height:30px;background:#e1e4f5;border-radius:11px;"></div>
<div class="t" style="left:1169px;top:793.11px;font-size:21px;line-height:21px;font-family:'Liberation Mono',monospace;color:#1b2150;font-weight:400;">bigint</div>
<div class="t" style="left:1359px;top:793.11px;font-size:21px;line-height:21px;font-family:'Liberation Mono',monospace;color:#1b2150;font-weight:400;">NO</div>
<div class="t" style="left:828.5px;top:847.11px;font-size:21px;line-height:21px;font-family:'Liberation Mono',monospace;color:#1b2150;font-weight:400;">name</div>
<div class="r" style="left:1157px;top:840px;width:175px;height:30px;background:#e1e4f5;border-radius:11px;"></div>
<div class="t" style="left:1169px;top:847.11px;font-size:21px;line-height:21px;font-family:'Liberation Mono',monospace;color:#1b2150;font-weight:400;">varchar(255)</div>
<div class="t" style="left:1359px;top:847.11px;font-size:21px;line-height:21px;font-family:'Liberation Mono',monospace;color:#1b2150;font-weight:400;">NO</div>
<div class="r" style="left:804px;top:882px;width:780px;height:54px;background:#fdeeee;"></div>
<div class="r" style="left:830px;top:910px;width:8px;height:2.1px;background:#c41f30;"></div>
<div class="t" style="left:846px;top:901.11px;font-size:21px;line-height:21px;font-family:'Liberation Mono',monospace;color:#1b2150;font-weight:400;">status</div>
<div class="r" style="left:1157px;top:894px;width:188px;height:30px;background:#e1e4f5;border-radius:11px;"></div>
<div class="t" style="left:1169px;top:901.11px;font-size:21px;line-height:21px;font-family:'Liberation Mono',monospace;color:#1b2150;font-weight:400;">enum('PENDIN…</div>
<div class="t" style="left:1359px;top:901.11px;font-size:21px;line-height:21px;font-family:'Liberation Mono',monospace;color:#1b2150;font-weight:400;">NO</div>
<div class="t" style="left:1434.5px;top:901.11px;font-size:21px;line-height:21px;font-family:'Liberation Mono',monospace;color:#1b2150;font-weight:400;">APPROVED</div>
<div class="t" style="left:828.5px;top:955.11px;font-size:21px;line-height:21px;font-family:'Liberation Mono',monospace;color:#1b2150;font-weight:400;">atlas_version</div>
<div class="r" style="left:1157px;top:948px;width:175px;height:30px;background:#e1e4f5;border-radius:11px;"></div>
<div class="t" style="left:1169px;top:955.11px;font-size:21px;line-height:21px;font-family:'Liberation Mono',monospace;color:#1b2150;font-weight:400;">varchar(255)</div>
<div class="t" style="left:1359px;top:955.11px;font-size:21px;line-height:21px;font-family:'Liberation Mono',monospace;color:#1b2150;font-weight:400;">NO</div>
<div class="r" style="left:804px;top:990px;width:780px;height:54px;background:#eefcf3;"></div>
<div class="r" style="left:830.6px;top:1018.1px;width:11.6px;height:2px;background:#178038;"></div>
<div class="r" style="left:835.4px;top:1013.3px;width:2px;height:11.3px;background:#178038;"></div>
<div class="t" style="left:851px;top:1009.11px;font-size:21px;line-height:21px;font-family:'Liberation Mono',monospace;color:#1b2150;font-weight:400;">status</div>
<div class="r" style="left:1157px;top:1002px;width:188px;height:30px;background:#e1e4f5;border-radius:11px;"></div>
<div class="t" style="left:1169px;top:1009.11px;font-size:21px;line-height:21px;font-family:'Liberation Mono',monospace;color:#1b2150;font-weight:400;">enum('APPROV…</div>
<div class="t" style="left:1359px;top:1009.11px;font-size:21px;line-height:21px;font-family:'Liberation Mono',monospace;color:#1b2150;font-weight:400;">NO</div>
<div class="t" style="left:1434.5px;top:1009.11px;font-size:21px;line-height:21px;font-family:'Liberation Mono',monospace;color:#1b2150;font-weight:400;">APPROVED</div>
</body></html>
